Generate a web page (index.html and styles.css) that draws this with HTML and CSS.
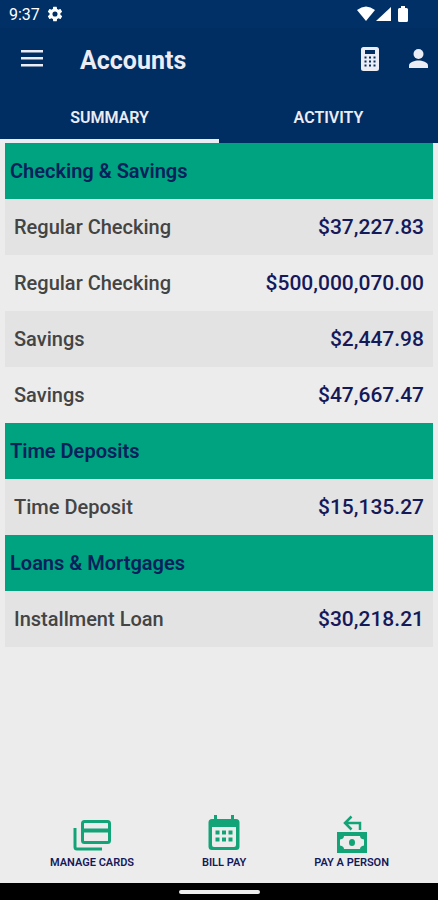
FILE: index.html
```
<!doctype html>
<html lang="en">
<head>
<meta charset="UTF-8">
<meta name="viewport" content="width=device-width,initial-scale=1">
<title>Accounts</title>
<link rel="stylesheet" href="styles.css">
</head>
<body>
<div class="status">
  <span>9:37</span>
  <svg class="gear" width="16" height="16" viewBox="1 1 22 22" fill="currentColor"><path d="M19.400 13a7.500 7.500 0 0 0 0-2l2.100-1.700c.2-.1.300-.4.100-.6l-2-3.500c-.1-.2-.4-.3-.6-.2l-2.500 1a7.300 7.300 0 0 0-1.700-1l-.4-2.600a.5.5 0 0 0-.5-.4h-4a.5.5 0 0 0-.5.4L9.100 5a7.700 7.700 0 0 0-1.700 1l-2.500-1c-.2-.1-.5 0-.6.200l-2 3.500c-.1.200-.1.500.1.600L4.500 11a8 8 0 0 0 0 2l-2.100 1.700c-.2.100-.2.400-.1.600l2 3.500c.1.200.4.300.6.200l2.500-1c.5.400 1.100.7 1.700 1l.4 2.600c0 .2.200.4.500.4h4c.2 0 .5-.2.500-.4l.4-2.600c.6-.3 1.200-.6 1.700-1l2.500 1c.2.100.5 0 .6-.2l2-3.500c.1-.2.100-.5-.1-.6zM12 15.500a3.500 3.500 0 1 1 0-7 3.500 3.500 0 0 1 0 7z"/></svg>
  <div class="signals">
    <svg width="18" height="16" viewBox="0 0 18 16" fill="currentColor"><path d="M0 4Q9-3 18 4L9 15z"/></svg>
    <svg width="15" height="16" viewBox="0 0 15 16" fill="currentColor"><path d="M15 1v14H0z"/></svg>
    <svg class="battery" width="10" height="16" viewBox="0 0 10 16" fill="currentColor"><path d="M3 0h4v2h1.500q1.500 0 1.500 1.500v11q0 1.500-1.500 1.500h-7Q0 16 0 14.500v-11Q0 2 1.500 2H3z"/></svg>
  </div>
</div>
<header class="bar">
  <button class="icon-btn" aria-label="Menu">
    <svg width="22" height="20" viewBox="0 0 22 20" fill="currentColor"><path d="M0 0h22v2.500H0zM0 7h22v2.500H0zM0 14h22v2.500H0z"/></svg>
  </button>
  <h1>Accounts</h1>
  <button class="icon-btn" aria-label="Calculator">
    <svg width="18" height="26" viewBox="0 0 18 26" fill="currentColor" fill-rule="evenodd"><path d="M2.500 0h13Q18 0 18 2.500v19q0 2.500-2.500 2.500h-13Q0 24 0 21.500v-19Q0 0 2.500 0zM4 3v4h10V3zM3.500 9.500v2h2v-2zM8 9.500v2h2v-2zM12.500 9.500v2h2v-2zM3.500 13.500v2h2v-2zM8 13.500v2h2v-2zM12.500 13.500v2h2v-2zM3.500 17.500v2h2v-2zM8 17.500v2h2v-2zM12.500 17.500v2h2v-2z"/></svg>
  </button>
  <button class="icon-btn" aria-label="Profile">
    <svg width="19" height="22" viewBox="0 0 19 22" fill="currentColor"><circle cx="9.500" cy="5" r="5"/><path d="M0 19v-2.500C0 13 6 11.500 9.500 11.500S19 13 19 16.500V19z"/></svg>
  </button>
</header>
<nav class="tabs">
  <button class="tab active">SUMMARY</button>
  <button class="tab">ACTIVITY</button>
</nav>

<main class="content">
  <table class="accounts">
    <tbody>
      <tr class="group"><th colspan="2">Checking &amp; Savings</th></tr>
      <tr><td>Regular Checking</td><td class="amount">$37,227.83</td></tr>
      <tr><td>Regular Checking</td><td class="amount">$500,000,070.00</td></tr>
      <tr><td>Savings</td><td class="amount">$2,447.98</td></tr>
      <tr><td>Savings</td><td class="amount">$47,667.47</td></tr>
    </tbody>
    <tbody>
      <tr class="group"><th colspan="2">Time Deposits</th></tr>
      <tr><td>Time Deposit</td><td class="amount">$15,135.27</td></tr>
    </tbody>
    <tbody>
      <tr class="group"><th colspan="2">Loans &amp; Mortgages</th></tr>
      <tr><td>Installment Loan</td><td class="amount">$30,218.21</td></tr>
    </tbody>
  </table>
</main>

<footer class="actions">
  <a class="action" href="#cards">
    <svg width="38" height="40" viewBox="0 0 38 40" fill="none" stroke="currentColor" stroke-width="3"><rect x="9.500" y="6.500" width="27" height="21" rx="2"/><path d="M9 15.500h28" stroke-width="4"/><path d="M2 13v19q0 2 2 2h25"/></svg>
    MANAGE CARDS
  </a>
  <a class="action" href="#billpay">
    <svg width="32" height="40" viewBox="0 0 32 40" fill="currentColor" fill-rule="evenodd"><path d="M6 0h3v4h14V0h3v4h2q3.500 0 3.500 3.500v24q0 3.500-3.500 3.500H4Q.5 35 .5 31.500v-24Q.5 4 4 4h2zM4 12v18q0 2 2 2h20q2 0 2-2V12z"/><path d="M7.500 15.500h4v4h-4zM14 15.500h4v4h-4zM20.500 15.500h4v4h-4zM7.500 22.500h4v4h-4zM14 22.500h4v4h-4zM20.500 22.500h4v4h-4z"/></svg>
    BILL PAY
  </a>
  <a class="action" href="#payperson">
    <svg width="32" height="40" viewBox="0 0 32 40"><path d="M15.500 1.500L9 8l6.500 6.500M9.500 8H24v7" fill="none" stroke="currentColor" stroke-width="2.500"/><path fill="currentColor" fill-rule="evenodd" d="M1 17h30v21H1zM8 21q0 3-4 3.500v6q4 .5 4 3.500h16q0-3 4-3.500v-6q-4-.5-4-3.500z"/><ellipse cx="16" cy="27.500" rx="3" ry="3.500" fill="currentColor"/></svg>
    PAY A PERSON
  </a>
</footer>
<div class="home"><span class="pill"></span></div>
</body>
</html>
```
FILE: styles.css
```
* {
	box-sizing: border-box;
}
body {
	display: flex;
	flex-direction: column;
	min-height: 100vh;
	margin: 0;
	font-family: Roboto, "Liberation Sans", sans-serif;
	font-weight: 500;
	color: #444;
	background-color: #ececec;
}
button {
	padding: 0;
	border: 0;
	background: none;
	font: inherit;
	color: inherit;
}
svg {
	display: block;
}
.status {
	display: flex;
	align-items: center;
	height: 28px;
	padding: 0 30px 0 9px;
	font-size: 16px;
	font-weight: 400;
	color: #fff;
	background-color: #003066;
}
.gear {
	margin-left: 7px;
}
.signals {
	display: flex;
	gap: 1px;
	margin-left: auto;
}
.battery {
	margin-left: 6px;
}
.bar {
	display: flex;
	align-items: center;
	height: 64px;
	padding: 0 10px 0 21px;
	color: #ececf4;
	background-color: #002d62;
}
.bar h1 {
	flex: 1;
	margin: 0 0 0 37px;
	font-size: 25px;
	font-weight: 700;
}
.icon-btn + .icon-btn {
	margin-left: 30px;
}
.tabs {
	display: flex;
	height: 51px;
	color: #ececf4;
	background-color: #002d62;
}
.tab {
	flex: 1;
	border-top: 4px solid transparent;
	border-bottom: 4px solid transparent;
	font-size: 16px;
	font-weight: 600;
}
.tab.active {
	border-bottom-color: #ececf4;
}
.content {
	flex: 1;
	padding: 0 5px;
}
.accounts {
	width: 100%;
	border-collapse: collapse;
	font-size: 20px;
}
.accounts tr {
	height: 56px;
}
.accounts tr:nth-child(even) {
	background-color: #e3e3e3;
}
.accounts td {
	padding: 0 9px;
}
.accounts .amount {
	font-size: 21px;
	text-align: right;
	color: #14195a;
}
.accounts .group {
	background-color: #00a380;
}
.accounts th {
	padding: 0 5px;
	font-weight: 600;
	text-align: left;
	color: #04215c;
}
.actions {
	display: flex;
	justify-content: space-between;
	padding: 0 49px 13px 50px;
}
.action {
	display: flex;
	flex-direction: column;
	align-items: center;
	gap: 1px;
	font-size: 11px;
	font-weight: 600;
	line-height: 14px;
	text-decoration: none;
	color: #14195a;
}
.action svg {
	color: #12a377;
}
.home {
	display: flex;
	align-items: center;
	justify-content: center;
	height: 17px;
	background-color: #000;
}
.pill {
	width: 81px;
	height: 4px;
	border-radius: 2px;
	background-color: #eee;
}
```
